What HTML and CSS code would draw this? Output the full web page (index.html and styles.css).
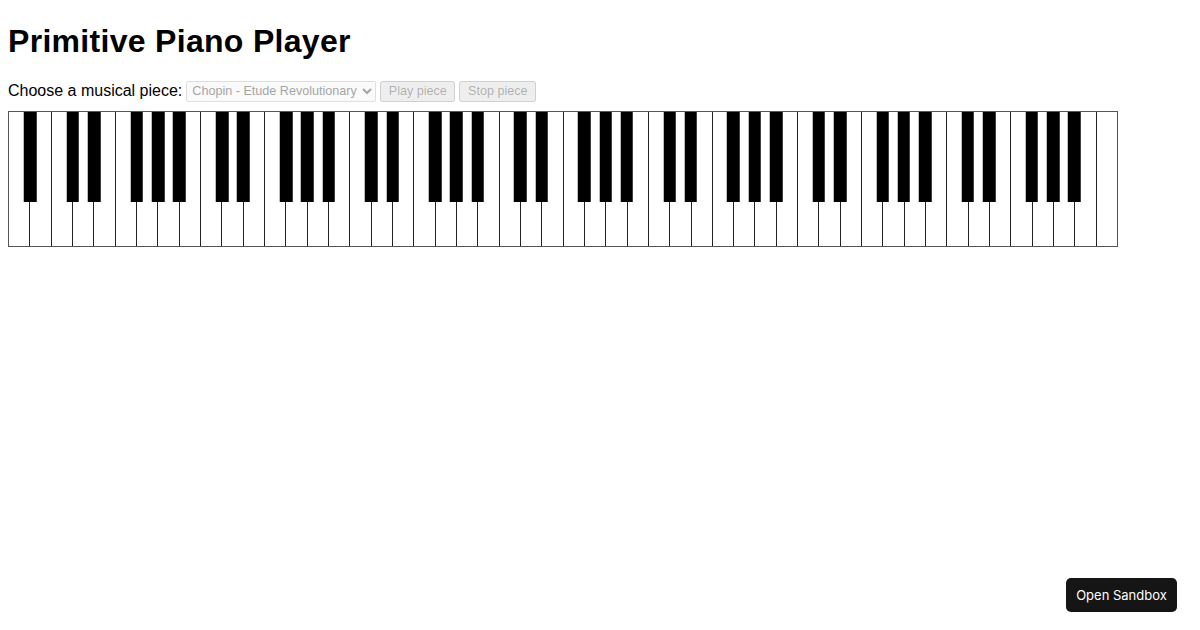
FILE: index.html
```html
<!DOCTYPE html>
<html>
<head>
<meta charset="utf-8">
<link rel="stylesheet" href="styles.css">
</head>
<body>
<h1 class="title">Primitive Piano Player</h1>
<div class="controls">
  <label class="label">Choose a musical piece:</label>
  <select class="piece" disabled><option>Chopin - Etude Revolutionary</option></select>
  <button class="btn btn-play" disabled>Play piece</button>
  <button class="btn btn-stop" disabled>Stop piece</button>
</div>
<div class="piano" id="piano"></div>
<button class="sandbox">Open Sandbox</button>
<script src="script.js"></script>
</body>
</html>
```
FILE: styles.css
```css
body {
  margin: 8px;
  font-family: "Liberation Sans", Arial, sans-serif;
  font-size: 16px;
  color: #000;
  background: #fff;
}
.title {
  font-size: 32px;
  font-weight: bold;
  letter-spacing: 0.3px;
  margin: 15px 0 20px;
}
.controls {
  display: flex;
  align-items: center;
  gap: 4px;
  height: 22px;
}
.label { margin-right: 0; }
.piece, .btn {
  font-family: "Liberation Sans", Arial, sans-serif;
  font-size: 12.6px;
  height: 21px;
  box-sizing: border-box;
}
.piece { width: 190px; padding-left: 1px; }
.btn { padding: 0; }
.btn-play { width: 75px; }
.btn-stop { width: 77px; }
.piano {
  position: relative;
  display: flex;
  width: 1110px;
  height: 136px;
  margin-top: 9px;
  border: 1px solid #555;
  box-sizing: border-box;
}
.white {
  flex: 1;
  border-left: 1px solid #222;
  background: #fff;
}
.white:first-child { border-left: none; }
.black {
  position: absolute;
  top: 0;
  width: 12.5px;
  height: 90px;
  background: #000;
  transform: translateX(-50%);
}
.sandbox {
  position: fixed;
  right: 23px;
  bottom: 18px;
  width: 111px;
  height: 34px;
  border: none;
  border-radius: 5px;
  background: #151515;
  color: #fff;
  font-family: Inter, "Liberation Sans", sans-serif;
  font-size: 13px;
}
```
FILE: script.js
```js
var piano = document.getElementById('piano');
var n = 52;
for (var i = 0; i < n; i++) {
  var w = document.createElement('div');
  w.className = 'white';
  piano.appendChild(w);
}
// white key names starting at A0
var names = ['A','B','C','D','E','F','G'];
for (var i = 0; i < n - 1; i++) {
  var nm = names[i % 7];
  if (nm === 'A' || nm === 'C' || nm === 'D' || nm === 'F' || nm === 'G') {
    var b = document.createElement('div');
    b.className = 'black';
    b.style.left = ((i + 1) / n * 100) + '%';
    piano.appendChild(b);
  }
}
```
